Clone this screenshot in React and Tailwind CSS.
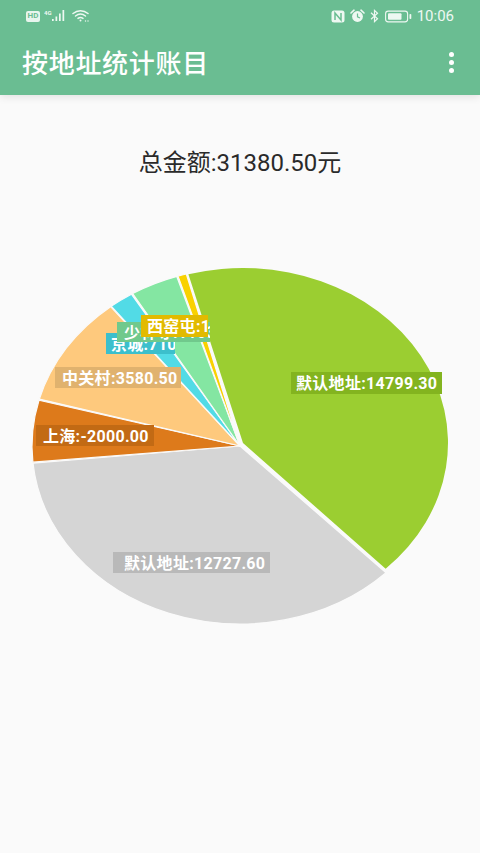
import React from "react";

function onEllipse(cx, cy, rx, ry, x, y) {
  const t = Math.atan2((y - cy) / ry, (x - cx) / rx);
  return [cx + rx * Math.cos(t), cy + ry * Math.sin(t)];
}

function slice(cx, cy, rx, ry, a, b, large = 0) {
  const p = onEllipse(cx, cy, rx, ry, a[0], a[1]);
  const q = onEllipse(cx, cy, rx, ry, b[0], b[1]);
  return `M${cx} ${cy} L${p[0]} ${p[1]} A${rx} ${ry} 0 ${large} 1 ${q[0]} ${q[1]} Z`;
}

const slices = [
  { d: slice(243, 443, 205, 175, [187, 270], [386, 569]), fill: "#9bce31" },
  { d: slice(240, 446, 208, 178, [384, 571], [35, 463]), fill: "#d5d5d5" },
  { d: slice(240, 446, 208, 178, [35, 462], [38, 400]), fill: "#dd7a1b" },
  { d: slice(240, 446, 208, 178, [39, 399], [110, 306]), fill: "#fec97d" },
  { d: slice(240, 446, 208, 178, [111, 306], [132, 295]), fill: "#52dbe6" },
  { d: slice(240, 446, 208, 178, [133, 294], [177, 277]), fill: "#84e6a2" },
  { d: slice(240, 446, 208, 178, [178, 276], [186, 273]), fill: "#f9d100" },
];

function Label({ text, cls }) {
  return (
    <div className={`absolute flex items-center overflow-hidden whitespace-nowrap pt-[2px] text-white font-bold text-[16px] tracking-[0.3px] leading-none ${cls}`}>
      {text}
    </div>
  );
}

function StatusBar() {
  return (
    <div className="flex h-[32px] items-center justify-between pl-[26px] pr-[26px] text-white">
      <div className="flex items-center gap-[4px]">
        <span className="flex h-[11px] w-[14px] items-center justify-center rounded-[2px] bg-[#e8f5ee] text-[8px] font-bold leading-none text-[#6abd92]">HD</span>
        <svg width="24" height="14" viewBox="0 0 24 14" fill="#eef8f2">
          <text x="0" y="6" fontSize="6" fontWeight="700" fill="#eef8f2">4G</text>
          <rect x="8" y="10" width="1.7" height="2" />
          <rect x="11.5" y="7.5" width="1.7" height="4.5" />
          <rect x="15" y="4.5" width="1.7" height="7.5" />
          <rect x="18.5" y="1" width="1.7" height="11" />
        </svg>
        <svg width="18" height="14" viewBox="0 0 18 14" fill="none" stroke="#eef8f2" strokeWidth="1.5" strokeLinecap="round">
          <path d="M1 4.5C5.5 .8 11.5 .8 16 4.5" />
          <path d="M3.5 7C6.5 4.6 10.5 4.6 13.5 7" />
          <path d="M6 9.4C7.6 8.2 9.4 8.2 11 9.4" />
          <circle cx="8.5" cy="11.6" r="1" fill="#eef8f2" stroke="none" />
          <circle cx="13.5" cy="12" r="0.7" fill="#eef8f2" stroke="none" />
          <circle cx="16" cy="12" r="0.7" fill="#eef8f2" stroke="none" />
        </svg>
      </div>
      <div className="flex items-center gap-[5px]">
        <svg width="14" height="13" viewBox="0 0 14 13">
          <rect x="0.5" y="0.5" width="13" height="12" rx="2.5" fill="#eef8f2" />
          <path d="M4 10V3L10 10V3" fill="none" stroke="#6abd92" strokeWidth="1.5" />
        </svg>
        <svg width="15" height="14" viewBox="0 0 15 14">
          <circle cx="7.5" cy="7.5" r="5.4" fill="#eef8f2" />
          <path d="M1 4L4 1.2M14 4L11 1.2" stroke="#eef8f2" strokeWidth="1.6" strokeLinecap="round" />
          <path d="M7.5 4.5V7.8L10 9" fill="none" stroke="#6abd92" strokeWidth="1.2" />
        </svg>
        <svg width="9" height="14" viewBox="0 0 9 14" fill="none" stroke="#eef8f2" strokeWidth="1.2">
          <path d="M1 3.8L7.5 9.8L4.5 12.6V1.4L7.5 4.2L1 10.2" />
        </svg>
        <svg width="27" height="13" viewBox="0 0 27 13" className="ml-[1px]">
          <rect x="0.6" y="1.1" width="22" height="10.8" rx="2.6" fill="none" stroke="#eef8f2" strokeWidth="1.1" />
          <rect x="3" y="3.2" width="13.5" height="6.6" rx="1" fill="#eef8f2" />
          <rect x="24.5" y="4" width="1.8" height="5" rx="0.8" fill="#eef8f2" />
        </svg>
        <span className="text-[15px] leading-none text-[#eef8f2] font-['Roboto',sans-serif]">10:06</span>
      </div>
    </div>
  );
}

export default function App() {
  return (
    <div className="relative flex min-h-[853px] w-[480px] flex-col overflow-hidden bg-[#fafafa] font-['Roboto','Noto_Sans_CJK_SC',sans-serif]">
      <header className="z-10 h-[95px] bg-[#6abd92] shadow-[0_2px_8px_rgba(0,0,0,0.1)]">
        <StatusBar />
        <div className="flex h-[63px] items-center justify-between pl-[22px] pr-[26px]">
          <h1 className="text-[26px] font-medium leading-none tracking-[0.7px] text-white">按地址统计账目</h1>
          <div className="flex flex-col gap-[3px] pb-[2px]">
            <span className="h-[5px] w-[5px] rounded-full bg-white" />
            <span className="h-[5px] w-[5px] rounded-full bg-white" />
            <span className="h-[5px] w-[5px] rounded-full bg-white" />
          </div>
        </div>
      </header>

      <p className="mt-[54px] text-center text-[24px] leading-[28px] text-[#2a2a2a]">总金额:31380.50元</p>

      <div className="relative mt-[83px] h-[372px] w-[480px]">
        <svg width="480" height="372" viewBox="0 260 480 372" className="block">
          {slices.map((s, i) => (
            <path key={i} d={s.d} fill={s.fill} stroke={i === 0 ? "none" : "#fafafa"} strokeWidth="1.2" strokeLinejoin="round" />
          ))}
        </svg>
        <Label text="默认地址:14799.30" cls="left-[291px] top-[112px] h-[22px] w-[151px] pl-[5px] bg-[#83b41f]" />
        <Label text="默认地址:12727.60" cls="left-[113px] top-[292px] h-[21px] w-[157px] pl-[11px] bg-[#b9b9b9]" />
        <Label text="上海:-2000.00" cls="left-[36px] top-[165px] h-[21px] w-[118px] pl-[7px] bg-[#c26a14]" />
        <Label text="中关村:3580.50" cls="left-[55px] top-[107px] h-[21px] w-[126px] pl-[7px] bg-[#e0b26e]" />
        <Label text="京城:710.00" cls="left-[106px] top-[73px] h-[21px] w-[69px] pl-[5px] bg-[#3cbfcc]" />
        <Label text="少林寺:1103.50" cls="left-[117px] top-[62px] h-[20px] w-[93px] pl-[7px] bg-[#70c98c]" />
        <Label text="西窑屯:153.00" cls="left-[141px] top-[55px] h-[22px] w-[67px] pl-[6px] bg-[#e2ba00]" />
      </div>
    </div>
  );
}
